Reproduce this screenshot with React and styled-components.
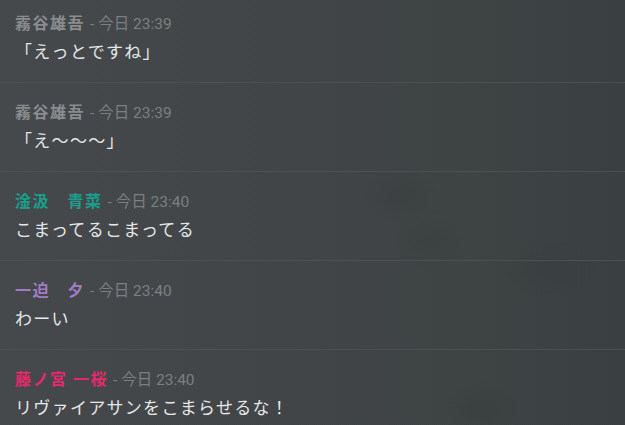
import React from 'react';
import styled, { createGlobalStyle } from 'styled-components';

const messages = [
  { name: '霧谷雄吾', color: '#8a8d8e', time: '今日 23:39', text: '「えっとですね」' },
  { name: '霧谷雄吾', color: '#8a8d8e', time: '今日 23:39', text: '「え～～～」' },
  { name: '淦汲　青菜', color: '#1a9e8c', time: '今日 23:40', text: 'こまってるこまってる' },
  { name: '一迫　夕', color: '#a07cc4', time: '今日 23:40', text: 'わーい' },
  { name: '藤ノ宮 一桜', color: '#e8286c', time: '今日 23:40', text: 'リヴァイアサンをこまらせるな！' },
];

const App = () => {
  return (
    <>
      <GlobalStyle />
      <Chat>
        <List>
          {messages.map((m, i) => (
            <Message key={i}>
              <Header>
                <Name $color={m.color}>{m.name}</Name>
                <Time>- {m.time}</Time>
              </Header>
              <Body>{m.text}</Body>
            </Message>
          ))}
        </List>
      </Chat>
    </>
  );
};

export default App;

const GlobalStyle = createGlobalStyle`
  html, body {
    margin: 0;
    padding: 0;
    height: 100%;
    overflow: hidden;
  }
  #root {
    height: 100%;
  }
`;

const Chat = styled.div`
  height: 100%;
  overflow: hidden;
  font-family: Roboto, "Noto Sans CJK JP", sans-serif;
  background:
    radial-gradient(ellipse 40px 30px at 400px 195px, rgba(30, 34, 35, 0.1), transparent),
    radial-gradient(ellipse 40px 30px at 430px 240px, rgba(30, 34, 35, 0.08), transparent),
    radial-gradient(ellipse 50px 30px at 550px 270px, rgba(30, 34, 35, 0.08), transparent),
    radial-gradient(ellipse 40px 30px at 480px 410px, rgba(30, 34, 35, 0.1), transparent),
    linear-gradient(90deg, #46494b 0%, #414547 45%, #3e4344 75%, #3a3f41 100%);
`;

const List = styled.div`
  margin-top: -6px;
  display: flex;
  flex-direction: column;
`;

const Message = styled.div`
  display: flex;
  flex-direction: column;
  gap: 6px;
  padding: 20px 15px 18px;
  border-bottom: 1px solid #4c5052;
`;

const Header = styled.div`
  display: flex;
  align-items: baseline;
  gap: 5px;
  line-height: 20px;
  white-space: pre;
`;

const Name = styled.span`
  color: ${p => p.$color};
  font-weight: 700;
  font-size: 16px;
  letter-spacing: 1.5px;
`;

const Time = styled.span`
  color: #7b7f80;
  font-size: 15.5px;
`;

const Body = styled.div`
  color: #e6e7e8;
  font-size: 17px;
  line-height: 24px;
  letter-spacing: 1.3px;
  white-space: pre;
`;
